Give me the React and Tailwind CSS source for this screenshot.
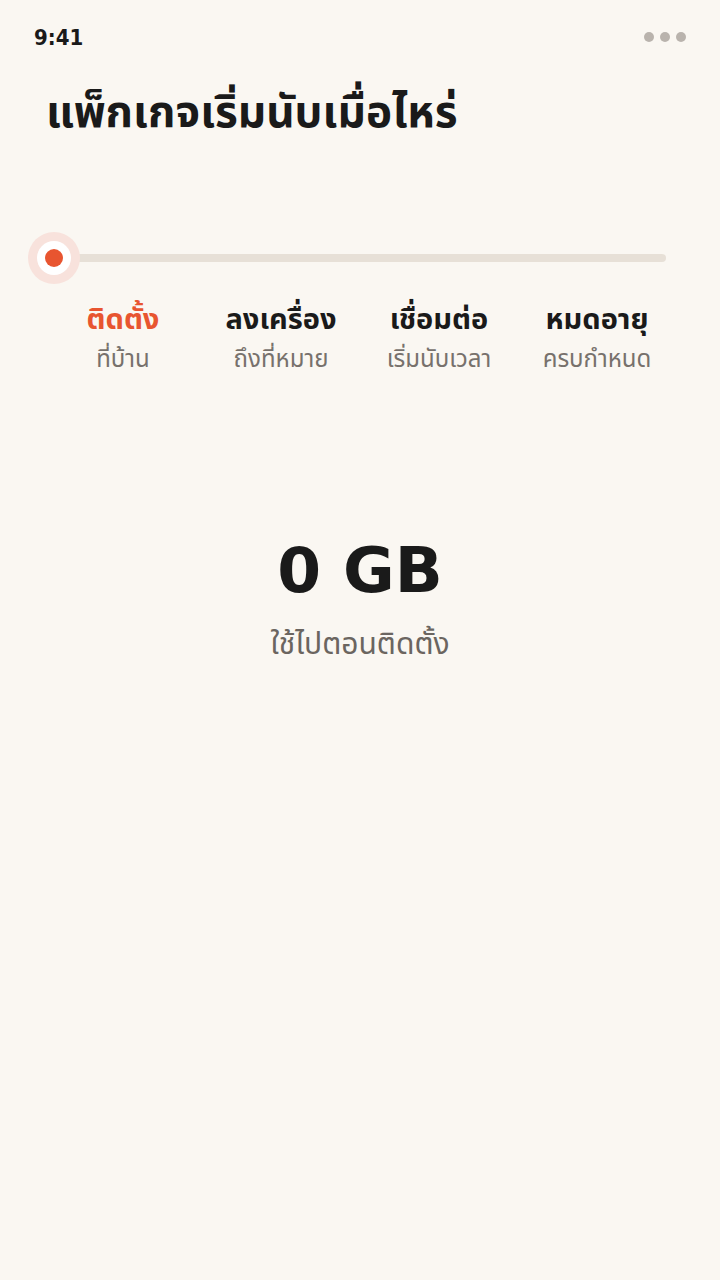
export default function App() {
  const steps = [
    { t: "ติดตั้ง", s: "ที่บ้าน", active: true },
    { t: "ลงเครื่อง", s: "ถึงที่หมาย" },
    { t: "เชื่อมต่อ", s: "เริ่มนับเวลา" },
    { t: "หมดอายุ", s: "ครบกำหนด" },
  ];
  return (
    <div className="w-[720px] h-[1280px] bg-[#faf7f2] flex flex-col font-['Noto_Sans_Thai','Noto_Sans','Liberation_Sans',sans-serif]">
      <div className="flex items-center justify-between px-[34px] h-[74px]">
        <span className="text-[22px] font-bold text-[#1a1a1a] font-['DejaVu_Sans_Condensed',sans-serif]">9:41</span>
        <div className="flex gap-[6px]">
          <span className="w-[10px] h-[10px] rounded-full bg-[#b9b3ad]" />
          <span className="w-[10px] h-[10px] rounded-full bg-[#b9b3ad]" />
          <span className="w-[10px] h-[10px] rounded-full bg-[#b9b3ad]" />
        </div>
      </div>
      <h1 className="px-[46px] mt-[7px] text-[44px] leading-[66px] font-bold text-[#1a1a1a]">แพ็กเกจเริ่มนับเมื่อไหร่</h1>
      <div className="mt-[85px] px-[28px] flex items-center">
        <div className="relative w-[52px] h-[52px] rounded-full bg-[#f8e2dc] flex items-center justify-center z-10">
          <div className="w-[34px] h-[34px] rounded-full bg-white flex items-center justify-center">
            <div className="w-[18px] h-[18px] rounded-full bg-[#e85530]" />
          </div>
        </div>
        <div className="flex-1 h-[8px] rounded-full bg-[#e7e0d7] -ml-[20px] mr-[26px]" />
      </div>
      <div className="mt-[15px] px-[44px] grid grid-cols-4">
        {steps.map((st) => (
          <div key={st.t} className="flex flex-col items-center">
            <span className={st.active ? "text-[29px] leading-[42px] font-bold text-[#e85530]" : "text-[29px] leading-[42px] font-bold text-[#1a1a1a]"}>{st.t}</span>
            <span className="text-[24px] leading-[38px] text-[#77716c]">{st.s}</span>
          </div>
        ))}
      </div>
      <div className="mt-[152px] flex flex-col items-center">
        <span className="text-[63px] leading-[80px] font-bold text-[#1a1a1a] font-['DejaVu_Sans',sans-serif]">0 GB</span>
        <span className="mt-[9px] text-[30px] leading-[50px] text-[#6b6560]">ใช้ไปตอนติดตั้ง</span>
      </div>
    </div>
  );
}
